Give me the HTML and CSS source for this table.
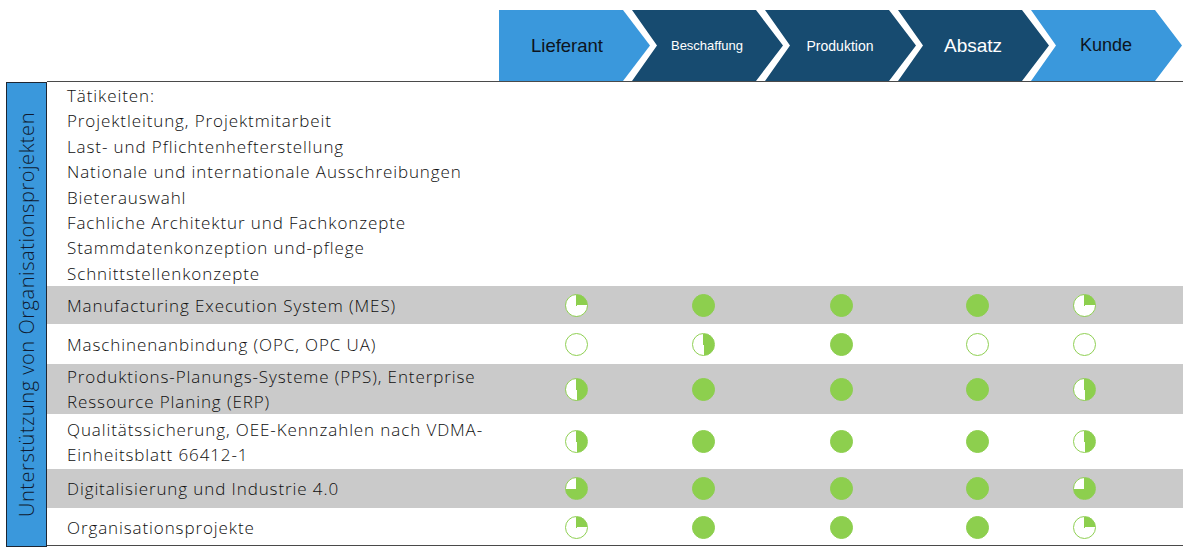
FILE: index.html
```html
<!DOCTYPE html>
<html lang="de">
<head>
<meta charset="utf-8">
<title>Organisationsprojekte</title>
<link rel="stylesheet" href="styles.css">
</head>
<body>
<div class="page">
  <div class="header">
    <div class="chev first light"><span class="t-lief">Lieferant</span></div>
    <div class="chev dark"><span class="t-besch">Beschaffung</span></div>
    <div class="chev dark"><span class="t-prod">Produktion</span></div>
    <div class="chev dark"><span class="t-abs">Absatz</span></div>
    <div class="chev light"><span class="t-kunde">Kunde</span></div>
  </div>
  <div class="matrix">
    <div class="side"><span class="side-text">Unterstützung von Organisationsprojekten</span></div>
    <div class="table">
      <div class="intro">
        <div>Tätikeiten:</div>
        <div>Projektleitung, Projektmitarbeit</div>
        <div>Last- und Pflichtenhefterstellung</div>
        <div>Nationale und internationale Ausschreibungen</div>
        <div>Bieterauswahl</div>
        <div>Fachliche Architektur und Fachkonzepte</div>
        <div>Stammdatenkonzeption und-pflege</div>
        <div>Schnittstellenkonzepte</div>
      </div>
      <div class="row gray h38">
        <div class="label">Manufacturing Execution System (MES)</div>
        <div class="hb q1 c1"></div><div class="hb full c2"></div><div class="hb full c3"></div><div class="hb full c4"></div><div class="hb q1 c5"></div>
      </div>
      <div class="row h40">
        <div class="label">Maschinenanbindung (OPC, OPC UA)</div>
        <div class="hb empty c1"></div><div class="hb half c2"></div><div class="hb full c3"></div><div class="hb empty c4"></div><div class="hb empty c5"></div>
      </div>
      <div class="row gray h50">
        <div class="label">Produktions-Planungs-Systeme (PPS), Enterprise<br>Ressource Planing (ERP)</div>
        <div class="hb half c1"></div><div class="hb full c2"></div><div class="hb full c3"></div><div class="hb full c4"></div><div class="hb half c5"></div>
      </div>
      <div class="row h55">
        <div class="label">Qualitätssicherung, OEE-Kennzahlen nach VDMA-<br>Einheitsblatt 66412-1</div>
        <div class="hb half c1"></div><div class="hb full c2"></div><div class="hb full c3"></div><div class="hb full c4"></div><div class="hb half c5"></div>
      </div>
      <div class="row gray h39">
        <div class="label">Digitalisierung und Industrie 4.0</div>
        <div class="hb q3 c1"></div><div class="hb full c2"></div><div class="hb full c3"></div><div class="hb full c4"></div><div class="hb q3 c5"></div>
      </div>
      <div class="row h38">
        <div class="label">Organisationsprojekte</div>
        <div class="hb q1 c1"></div><div class="hb full c2"></div><div class="hb full c3"></div><div class="hb full c4"></div><div class="hb q1 c5"></div>
      </div>
    </div>
  </div>
</div>
</body>
</html>
```

FILE: styles.css
```css
html, body {
  margin: 0;
  padding: 0;
  background: #ffffff;
}

.page {
  width: 1188px;
  height: 553px;
  overflow: hidden;
}

.header {
  display: flex;
  height: 71px;
  padding-top: 10px;
  padding-left: 499px;
}

.chev {
  flex: none;
  width: 151px;
  height: 71px;
  display: flex;
  align-items: center;
  justify-content: center;
  padding-left: 26px;
  padding-right: 27px;
  box-sizing: border-box;
  margin-left: -18px;
  font-family: "Liberation Sans", Arial, sans-serif;
  clip-path: polygon(0 0, 124px 0, 151px 50%, 124px 100%, 0 100%, 25px 50%);
}

.chev.first {
  margin-left: 0;
  padding-left: 12px;
  clip-path: polygon(0 0, 124px 0, 151px 50%, 124px 100%, 0 100%);
}

.light {
  background: #3a98dc;
  color: #0d1420;
}

.dark {
  background: #174b70;
  color: #ffffff;
}

.t-lief { font-size: 18.5px; }
.t-besch { font-size: 13px; }
.t-prod { font-size: 14px; }
.t-abs { font-size: 19px; }
.t-kunde { font-size: 18px; }

.matrix {
  display: flex;
  margin-left: 6px;
  width: 1177px;
  height: 466px;
}

.side {
  width: 41px;
  box-sizing: border-box;
  background: #3a98dc;
  border: 1px solid #1d2633;
  margin-top: 1px;
  display: flex;
  align-items: center;
  justify-content: center;
}

.side-text {
  writing-mode: vertical-rl;
  transform: rotate(180deg);
  font-family: "Open Sans", sans-serif;
  font-weight: 300;
  font-size: 20px;
  letter-spacing: 0.55px;
  color: #0f1a30;
  white-space: nowrap;
}

.table {
  flex: 1;
  border-top: 1px solid #4a4a4a;
  border-bottom: 1px solid #4a4a4a;
  font-family: "Open Sans", sans-serif;
  font-weight: 300;
  font-size: 17px;
  letter-spacing: 0.9px;
  color: #0e0e0e;
  height: 465px;
  box-sizing: border-box;
}

.intro {
  height: 204px;
  padding-left: 20px;
  padding-top: 1px;
  box-sizing: border-box;
  line-height: 25.4px;
}

.row {
  display: grid;
  grid-template-columns: 518px 23px 104px 23px 115px 23px 113px 23px 84px 23px 1fr;
  align-items: center;
}

.row.gray {
  background: #cacaca;
}

.h38 { height: 38px; }
.h39 { height: 39px; }
.h40 { height: 40px; }
.h50 { height: 50px; }
.h55 { height: 55px; }

.label {
  grid-column: 1;
  padding-left: 20px;
  line-height: 25px;
  white-space: nowrap;
}

.c1 { grid-column: 2; }
.c2 { grid-column: 4; }
.c3 { grid-column: 6; }
.c4 { grid-column: 8; }
.c5 { grid-column: 10; }

.hb {
  width: 23px;
  height: 23px;
  border-radius: 50%;
  box-sizing: border-box;
  border: 1px solid #8fd053;
  background: #ffffff;
}

.hb.full {
  background: #8dcf4e;
  border-color: #8dcf4e;
}

.hb.empty {
  background: #ffffff;
}

.hb.q1 {
  background: conic-gradient(#8dcf4e 0 25%, #ffffff 0);
}

.hb.half {
  background: conic-gradient(#8dcf4e 0 50%, #ffffff 0);
}

.hb.q3 {
  background: conic-gradient(#8dcf4e 0 75%, #ffffff 0);
}
```
